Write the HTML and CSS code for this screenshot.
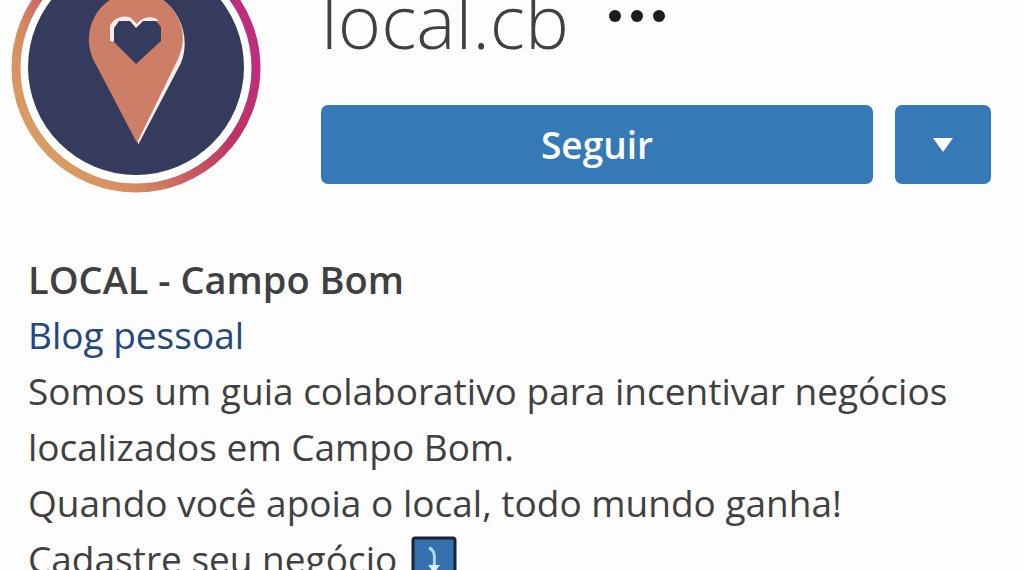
FILE: index.html
```html
<!DOCTYPE html>
<html lang="pt-BR">

<head>
    <meta charset="UTF-8">
    <meta name="viewport" content="width=device-width, initial-scale=1.0">
    <title>local.cb</title>
    <link rel="stylesheet" href="styles.css">
</head>

<body>

    <header class="profile">
        <!-- Avatar with story ring -->
        <svg class="avatar" viewBox="0 0 250 193" role="img" aria-label="local.cb">
            <defs>
                <linearGradient id="ring" gradientUnits="userSpaceOnUse" x1="40" y1="150" x2="215" y2="20">
                    <stop offset="0" stop-color="#d99b62"/>
                    <stop offset="0.2" stop-color="#d58d60"/>
                    <stop offset="0.45" stop-color="#c85a60"/>
                    <stop offset="0.68" stop-color="#bd3564"/>
                    <stop offset="1" stop-color="#bd2f7c"/>
                </linearGradient>
            </defs>
            <circle cx="125" cy="68" r="120" fill="#fff" stroke="url(#ring)" stroke-width="9"/>
            <circle cx="125" cy="67" r="108" fill="#343b5d"/>
            <path d="M127 145L170 63C183 30 160-8 127-8V40Z" fill="#f6ece9"/>
            <path d="M126 143L82 59C68 27 91-8 125-8C160-8 182 27 167 59Z" fill="#cc7e66"/>
            <path d="M99 41V26C102 18 113 14 120 18L126 24C132 16 142 16 147 20L125 45Z" fill="#f6ece9"/>
            <path d="M125 64L103 42V28L108 21H119L125 28L132 21H145L150 27V41Z" fill="#343b5d"/>
        </svg>

        <div class="details">
            <div class="title">
                <h1>local.cb</h1>
                <button type="button" class="more" aria-label="Mais opções">
                    <svg width="60" height="16" viewBox="0 0 60 16">
                        <circle cx="8" cy="8" r="6" fill="#1c1c1c"/>
                        <circle cx="30" cy="8" r="6" fill="#1c1c1c"/>
                        <circle cx="52" cy="8" r="6" fill="#1c1c1c"/>
                    </svg>
                </button>
            </div>
            <div class="actions">
                <button type="button" class="btn follow">Seguir</button>
                <button type="button" class="btn suggest" aria-label="Sugestões">
                    <svg width="20" height="14" viewBox="0 0 20 14">
                        <path d="M0 0H20L10 14Z" fill="#fff"/>
                    </svg>
                </button>
            </div>
        </div>
    </header>

    <!-- Bio -->
    <section class="bio">
        <h2>LOCAL - Campo Bom</h2>
        <a href="#">Blog pessoal</a>
        <p>Somos um guia colaborativo para incentivar negócios localizados em Campo Bom.</p>
        <p>Quando você apoia o local, todo mundo ganha!</p>
        <p class="cta">Cadastre seu negócio
            <svg width="46" height="46" viewBox="0 0 46 46">
                <rect x="2" y="2" width="42" height="42" rx="2" fill="#346fae" stroke="#1b2433" stroke-width="3"/>
                <path d="M18 12C24 14 24 20 23 32" fill="none" stroke="#a9dcf0" stroke-width="3"/>
                <path d="M17 29H29L23 37Z" fill="#dff3fa"/>
            </svg>
        </p>
    </section>

</body>

</html>
```

FILE: styles.css
```css
body {
    font-family: "Segoe UI", "Open Sans", "Noto Sans", sans-serif;
    font-size: 37px;
    line-height: 56px;
    margin: 0;
    height: 100vh;
    overflow: hidden;
    background: #fdfdfd;
    color: #404040;
}

h1, h2, p {
    margin: 0;
}

button {
    border: none;
    padding: 0;
    font-family: inherit;
    cursor: pointer;
}

.profile {
    display: flex;
    gap: 60px;
    padding: 0 33px 0 11px;
}

.avatar {
    width: 250px;
    height: 193px;
    flex-shrink: 0;
}

.details {
    flex: 1;
}

.title {
    display: flex;
    align-items: flex-start;
    gap: 38px;
    height: 105px;
}

.title h1 {
    font-size: 74px;
    font-weight: 300;
    line-height: 42px;
}

.more {
    background: none;
    height: 32px;
}

.more svg, .btn svg {
    display: block;
    margin: 0 auto;
}

.actions {
    display: flex;
    gap: 22px;
}

.btn {
    height: 79px;
    border-radius: 7px;
    background: #357ab7;
    color: #fff;
}

.follow {
    flex: 1;
    font-size: 37px;
    font-weight: 600;
}

.suggest {
    width: 96px;
}

.bio {
    padding: 58px 28px 0;
}

.bio h2 {
    font-size: 38px;
    font-weight: 600;
}

.bio a {
    display: block;
    color: #23477f;
    text-decoration: none;
}

.cta {
    display: flex;
    align-items: center;
    gap: 14px;
}
```
